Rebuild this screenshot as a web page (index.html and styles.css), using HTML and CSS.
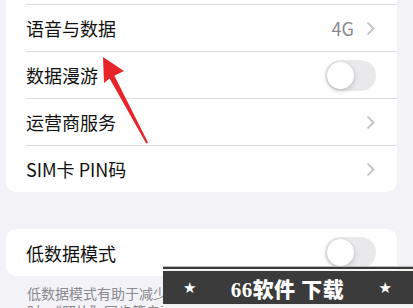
FILE: index.html
```html
<!DOCTYPE html>
<html lang="zh">
<head>
<meta charset="utf-8">
<link rel="stylesheet" href="styles.css">
</head>
<body>
<div class="page">
  <div class="card card-top">
    <div class="row"><div class="inner"><span class="label">语音与数据</span><span class="right"><span class="value">4G</span><svg class="chev" width="8" height="13" viewBox="0 0 8 13"><path d="M1.2 1.2 L6.4 6.5 L1.2 11.8" fill="none" stroke="#c4c4c8" stroke-width="1.9" stroke-linecap="round" stroke-linejoin="round"/></svg></span></div></div>
    <div class="row"><div class="inner"><span class="label">数据漫游</span><span class="toggle"><span class="knob"></span></span></div></div>
    <div class="row"><div class="inner"><span class="label">运营商服务</span><svg class="chev" width="8" height="13" viewBox="0 0 8 13"><path d="M1.2 1.2 L6.4 6.5 L1.2 11.8" fill="none" stroke="#c4c4c8" stroke-width="1.9" stroke-linecap="round" stroke-linejoin="round"/></svg></div></div>
    <div class="row"><div class="inner"><span class="label">SIM卡 PIN码</span><svg class="chev" width="8" height="13" viewBox="0 0 8 13"><path d="M1.2 1.2 L6.4 6.5 L1.2 11.8" fill="none" stroke="#c4c4c8" stroke-width="1.9" stroke-linecap="round" stroke-linejoin="round"/></svg></div></div>
  </div>
  <div class="card card-single">
    <div class="row"><div class="inner first"><span class="label">低数据模式</span><span class="toggle"><span class="knob"></span></span></div></div>
  </div>
  <p class="footer">低数据模式有助于减少蜂窝网络数据使用量。打开低数据模式<br>时，“照片”同步等自动更新和后台任务将暂停。</p>
</div>
<svg class="arrow" width="413" height="308" viewBox="0 0 413 308">
  <polygon points="103,57 124,71 114.4,75.8 148,142.5 146.2,143.6 109.6,78.4 104,83" fill="#e8242b"/>
</svg>
<div class="banner">
  <div class="banner-box"><span class="star">★</span><span class="brand">66软件 下载</span><span class="star">★</span></div>
</div>
</body>
</html>
```
FILE: styles.css
```css
html, body {
  margin: 0;
  padding: 0;
}
body {
  width: 413px;
  height: 308px;
  overflow: hidden;
  background: #f2f2f7;
  font-family: "Noto Sans CJK SC", "Noto Sans", sans-serif;
  position: relative;
}
.page {
  padding: 0 16px 0 6px;
}
.card {
  background: #fff;
  border-radius: 10px;
}
.card-top {
  border-radius: 0 0 10px 10px;
  padding-top: 4px;
}
.card-single {
  margin-top: 37px;
}
.row {
  padding-left: 20px;
}
.inner {
  height: 46px;
  border-top: 1px solid #dcdce0;
  display: flex;
  align-items: center;
  justify-content: space-between;
  padding-right: 21px;
}
.inner.first {
  border-top: none;
  height: 47px;
}
.label {
  font-size: 18px;
  color: #111;
  letter-spacing: 0;
}
.right {
  display: flex;
  align-items: center;
  gap: 13px;
}
.value {
  font-size: 18px;
  color: #8a8a8e;
}
.chev {
  display: block;
  margin-right: 1px;
}
.toggle {
  width: 51px;
  height: 31px;
  border-radius: 16px;
  background: #e9e9eb;
  display: flex;
  align-items: center;
  padding-left: 2px;
  box-sizing: border-box;
}
.knob {
  width: 27px;
  height: 27px;
  border-radius: 50%;
  background: #fff;
  box-shadow: 0 2px 5px rgba(0,0,0,0.18), 0 0 1px rgba(0,0,0,0.12);
}
.footer {
  margin: 8px 0 0 21px;
  font-size: 14px;
  line-height: 18px;
  color: #8a8a8e;
  white-space: nowrap;
}
.arrow {
  position: absolute;
  left: 0;
  top: 0;
}
.banner {
  position: absolute;
  left: 163px;
  top: 266px;
  width: 250px;
  height: 42px;
  background: #f4f4f4;
  border-top: 1px solid #b8b8b8;
  box-sizing: border-box;
}
.banner::before {
  content: "";
  display: block;
  height: 2px;
  background: #3a3a3a;
  margin-bottom: 2px;
}
.banner-box {
  height: 33px;
  background: #3b3b3b;
  display: flex;
  align-items: center;
  justify-content: space-between;
  padding: 0 21px 0 20px;
  color: #fff;
  border-bottom: 1px solid #eee;
}
.star {
  font-size: 15px;
  font-family: "DejaVu Sans", sans-serif;
}
.brand {
  font-family: "Liberation Serif", "Noto Sans CJK SC", serif;
  font-weight: 900;
  font-size: 21px;
  letter-spacing: 0.5px;
}
```
